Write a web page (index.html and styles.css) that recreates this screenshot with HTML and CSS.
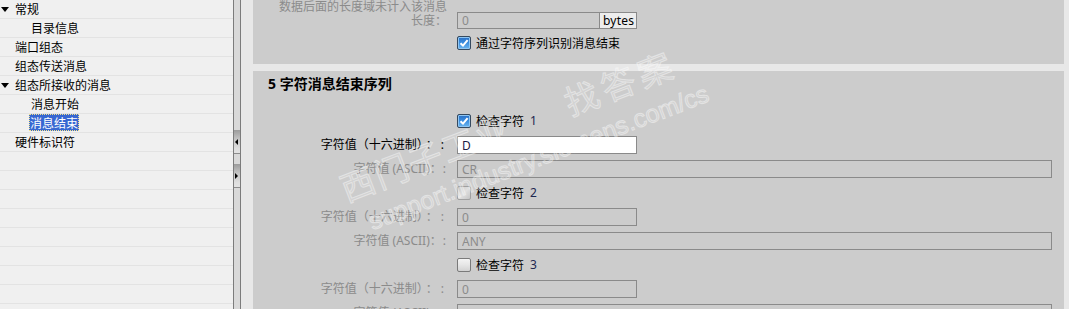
FILE: index.html
```html
<!DOCTYPE html>
<html lang="zh-CN">
<head>
<meta charset="utf-8">
<title>消息结束</title>
<link rel="stylesheet" href="styles.css">
</head>
<body>
<div class="app">
  <nav class="tree">
    <div class="node"><span class="caret"></span><span class="txt">常规</span></div>
    <div class="node child"><span class="txt">目录信息</span></div>
    <div class="node"><span class="txt">端口组态</span></div>
    <div class="node"><span class="txt">组态传送消息</span></div>
    <div class="node"><span class="caret"></span><span class="txt">组态所接收的消息</span></div>
    <div class="node child"><span class="txt">消息开始</span></div>
    <div class="node child"><span class="txt sel">消息结束</span></div>
    <div class="node"><span class="txt">硬件标识符</span></div>
  </nav>

  <div class="splitter">
    <div class="sbtn"><span class="arr arr-left"></span></div>
    <div class="sbtn"><span class="arr arr-right"></span></div>
  </div>

  <main class="main">
    <section class="sec sec-top">
      <div class="row row-len">
        <div class="lbl dim two">数据后面的长度域未计入该消息<br>长度：</div>
        <div class="field-unit">
          <input class="inp dis" type="text" value="0" readonly>
          <span class="unit">bytes</span>
        </div>
      </div>
      <div class="row row-cb first-cb">
        <div class="lbl"></div>
        <label class="cb"><span class="box on"><svg viewBox="0 0 10 10" width="10" height="10"><path d="M1.5 5.2 L4 7.6 L8.6 2.2" fill="none" stroke="#fff" stroke-width="2"/></svg></span><span class="cbt">通过字符序列识别消息结束</span></label>
      </div>
    </section>

    <section class="sec sec-seq">
      <h2 class="head">5 字符消息结束序列</h2>
      <div class="rows">
        <div class="row row-cb">
          <div class="lbl"></div>
          <label class="cb"><span class="box on"><svg viewBox="0 0 10 10" width="10" height="10"><path d="M1.5 5.2 L4 7.6 L8.6 2.2" fill="none" stroke="#fff" stroke-width="2"/></svg></span><span class="cbt">检查字符</span><span class="num">1</span></label>
        </div>
        <div class="row">
          <div class="lbl">字符值（十六进制）<span class="colons">：:</span></div>
          <input class="inp short act" type="text" value="D" readonly>
        </div>
        <div class="row">
          <div class="lbl dim">字符值 (ASCII)<span class="colons tight">：:</span></div>
          <input class="inp long dis" type="text" value="CR" readonly>
        </div>

        <div class="row row-cb">
          <div class="lbl"></div>
          <label class="cb"><span class="box off faded"></span><span class="cbt">检查字符</span><span class="num">2</span></label>
        </div>
        <div class="row">
          <div class="lbl dim">字符值（十六进制）<span class="colons">：:</span></div>
          <input class="inp short dis" type="text" value="0" readonly>
        </div>
        <div class="row">
          <div class="lbl dim">字符值 (ASCII)<span class="colons tight">：:</span></div>
          <input class="inp long dis" type="text" value="ANY" readonly>
        </div>

        <div class="row row-cb">
          <div class="lbl"></div>
          <label class="cb"><span class="box off"></span><span class="cbt">检查字符</span><span class="num">3</span></label>
        </div>
        <div class="row">
          <div class="lbl dim">字符值（十六进制）<span class="colons">：:</span></div>
          <input class="inp short dis" type="text" value="0" readonly>
        </div>
        <div class="row">
          <div class="lbl dim">字符值 (ASCII)<span class="colons tight">：:</span></div>
          <input class="inp long dis" type="text" value="" readonly>
        </div>
      </div>
    </section>
  </main>

  <div class="wm wm-cn">西门子工业</div>
  <div class="wm wm-cn2">找答案</div>
  <div class="wm wm-url">support.industry.siemens.com/cs</div>
</div>
</body>
</html>
```

FILE: styles.css
```css
* { box-sizing: border-box; }
html, body { margin: 0; padding: 0; }
body {
  width: 1069px;
  height: 309px;
  overflow: hidden;
  background: #e8e8e8;
  font-family: "Noto Sans", "Noto Sans CJK SC", sans-serif;
  font-size: 12px;
  color: #000;
}
.app {
  position: relative;
  display: flex;
  height: 309px;
  overflow: hidden;
}

/* ---------- tree ---------- */
.tree {
  width: 233px;
  flex: none;
  background: repeating-linear-gradient(to bottom, #f0f0f0 0, #f0f0f0 18px, #e3e3e3 18px, #e3e3e3 19px);
}
.node {
  position: relative;
  height: 19px;
  display: flex;
  align-items: flex-start;
  padding-left: 15px;
  font-family: "Noto Sans CJK SC", sans-serif;
  line-height: 18px;
}
.node.child { padding-left: 31px; }
.txt { display: block; height: 17px; line-height: 17px; }
.txt.sel {
  background: #3767d2;
  color: #fff;
  margin-left: -2px;
  padding: 0 1px;
  outline: 1px dotted #f4e28a;
  outline-offset: -1px;
}
.caret {
  position: absolute;
  left: 1px;
  top: 7px;
  width: 0;
  height: 0;
  border-left: 4px solid transparent;
  border-right: 4px solid transparent;
  border-top: 5px solid #000;
}

/* ---------- splitter ---------- */
.splitter {
  width: 8px;
  flex: none;
  background: #d9d9d9;
  border-left: 1px solid #7c7c7c;
  border-right: 1px solid #7c7c7c;
  display: flex;
  flex-direction: column;
  padding-top: 130px;
  gap: 10px;
}
.sbtn {
  height: 24px;
  background: linear-gradient(to bottom, #9c9c9c 0, #c4c4c4 40%, #dedede 80%, #e2e2e2 100%);
  border-bottom: 1px solid #8c8c8c;
  display: flex;
  align-items: center;
  padding-left: 1px;
}
.arr { width: 0; height: 0; border-top: 3px solid transparent; border-bottom: 3px solid transparent; }
.arr-left { border-right: 3px solid #000; }
.arr-right { border-left: 3px solid #000; }

/* ---------- main ---------- */
.main {
  flex: 1;
  background: #e8e8e8;
  padding: 0 5px 0 12px;
  display: flex;
  flex-direction: column;
  gap: 7px;
}
.sec { background: #cccccc; }
.sec-top { height: 64px; flex: none; }
.sec-seq { flex: 1; }

.row {
  display: grid;
  grid-template-columns: 194px 1fr;
  column-gap: 10px;
  align-items: center;
  height: 24px;
}
.row-len { height: 29px; align-items: end; }
.first-cb { margin-top: 2px; }

.lbl {
  text-align: right;
  white-space: nowrap;
  line-height: 14px;
  font-family: "Noto Sans", "Noto Sans CJK SC", sans-serif;
}
.lbl.two { align-self: start; height: 28px; }
.colons { letter-spacing: 3px; margin-left: 3px; }
.colons.tight { letter-spacing: 1px; margin-left: 0; }
.dim { color: #8b8b8b; }

.inp {
  display: block;
  height: 18px;
  border: 1px solid #8a8a8a;
  background: #cccccc;
  padding: 0 0 0 4px;
  margin: 0;
  font-family: "Noto Sans", sans-serif;
  font-size: 12px;
  color: #8b8b8b;
  outline: none;
}
.inp.short { width: 180px; }
.inp.long { width: 595px; }
.inp.act { background: #fff; color: #1b1b44; }

.field-unit {
  width: 180px;
  height: 17px;
  display: flex;
  border: 1px solid #8a8a8a;
  background: #cccccc;
}
.field-unit .inp { border: 0; height: 15px; flex: 1; min-width: 0; width: auto; }
.unit {
  width: 37px;
  flex: none;
  border-left: 1px solid #8a8a8a;
  background: #ededed;
  line-height: 15px;
  padding-left: 3px;
  font-family: "Noto Sans", sans-serif;
  letter-spacing: 0.2px;
}

.cb { display: flex; align-items: center; gap: 5px; height: 14px; }
.box {
  width: 14px;
  height: 14px;
  border-radius: 2px;
  display: flex;
  align-items: center;
  justify-content: center;
  flex: none;
}
.box.on {
  border: 1px solid #35495f;
  background: linear-gradient(to bottom, #2a6fc4 0, #3b8ee0 50%, #6eb6ee 100%);
  box-shadow: inset 0 0 0 1px #8fc6f2;
}
.box.off {
  border: 1px solid #7a7a7a;
  background: linear-gradient(to bottom, #f4f4f4 0, #e6e6e6 50%, #d2d2d2 100%);
}
.box.faded { border-color: #a0a0a0; background: linear-gradient(135deg, #c8c8c8, #e0e0e0 50%, #c4c4c4); }
.cbt { font-family: "Noto Sans CJK SC", sans-serif; line-height: 14px; }
.num { margin-left: 1px; color: #1d2750; line-height: 14px; }

.head {
  margin: 0;
  padding: 5px 0 0 15px;
  font-size: 14px;
  line-height: 16px;
  font-weight: bold;
  font-family: "Noto Sans", "Noto Sans CJK SC", sans-serif;
}
.rows { margin-top: 17px; }

/* ---------- watermark ---------- */
.wm {
  position: absolute;
  white-space: nowrap;
  pointer-events: none;
  transform-origin: 0 100%;
  transform: rotate(-21deg);
  color: rgba(255, 255, 255, 0.16);
  -webkit-text-stroke: 1px rgba(255, 255, 255, 0.42);
}
.wm-cn {
  left: 348px;
  top: 170px;
  font-family: "Noto Sans CJK SC", sans-serif;
  font-size: 34px;
  line-height: 36px;
  letter-spacing: 2px;
}
.wm-cn2 {
  left: 572px;
  top: 84px;
  font-family: "Noto Sans CJK SC", sans-serif;
  font-size: 34px;
  line-height: 36px;
  letter-spacing: 5px;
}
.wm-url {
  left: 374px;
  top: 208px;
  font-family: "Liberation Sans", sans-serif;
  font-size: 25px;
  line-height: 26px;
}
```
